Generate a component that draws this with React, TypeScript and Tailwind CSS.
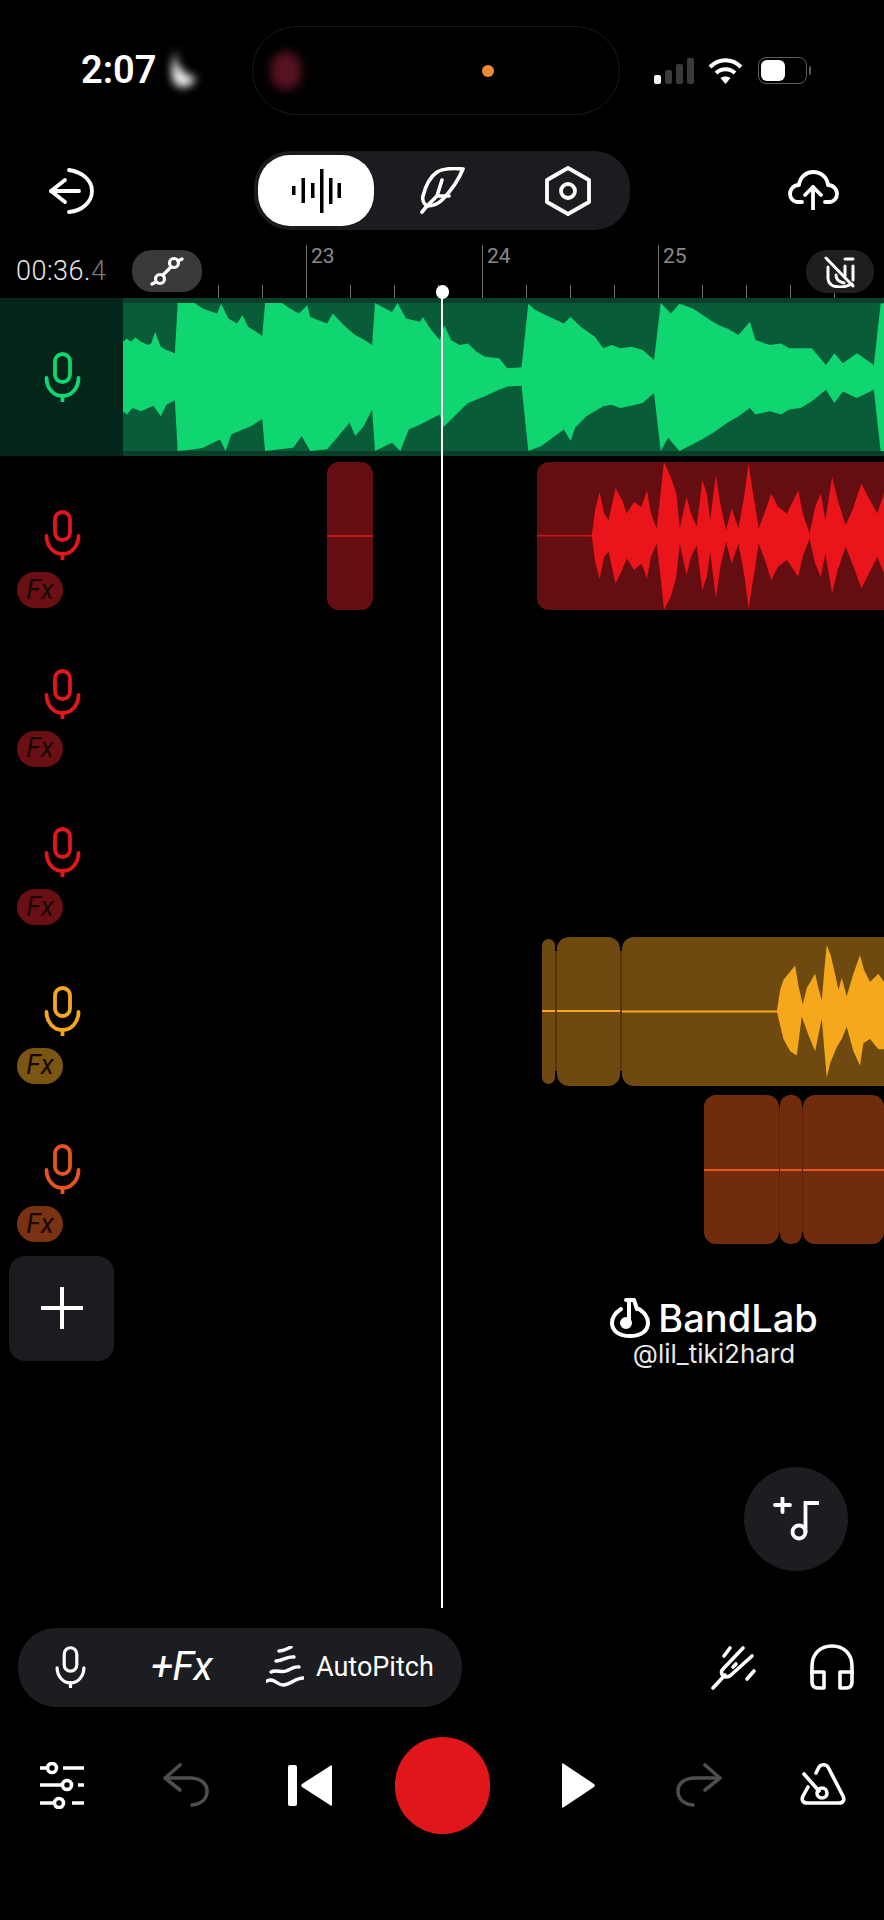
import React from "react";

const GREEN_TOP = "218,185 225,175 232,185 240,172 250,185 262,195 268,190 275,155 285,200 295,210 310,220 315,68 345,68 360,85 385,100 392,70 405,115 420,130 430,105 440,140 450,150 465,168 470,68 500,68 515,85 530,100 545,75 550,110 565,120 580,130 590,100 610,135 620,150 630,165 645,178 660,195 665,68 695,95 705,68 720,115 745,125 750,110 765,150 780,180 788,135 800,180 815,195 830,190 845,215 860,230 885,235 900,265 925,262 937,70 950,90 975,110 1000,130 1012,110 1030,140 1055,170 1070,205 1085,195 1100,205 1120,200 1140,210 1160,240 1172,68 1190,100 1205,70 1230,85 1260,120 1275,135 1290,145 1310,165 1330,125 1340,180 1365,195 1385,190 1400,205 1440,205 1465,255 1480,220 1495,250 1520,220 1550,255 1562,70 1568,68";
const GREEN_BOTTOM = "1568,515 1562,515 1550,330 1520,355 1495,335 1480,370 1465,330 1440,365 1420,385 1400,390 1385,405 1365,395 1340,405 1330,385 1310,410 1290,430 1265,460 1240,485 1205,515 1185,475 1172,515 1160,340 1140,370 1115,380 1100,385 1085,375 1070,380 1040,410 1020,445 1012,485 1000,450 960,500 937,515 925,318 900,320 885,330 860,350 830,370 815,395 800,420 785,445 780,405 745,435 725,450 710,515 695,490 665,515 660,390 645,440 630,470 620,430 595,480 580,510 550,515 535,470 520,505 470,515 465,418 445,440 430,450 410,465 400,515 390,480 360,505 345,510 315,515 310,362 295,375 285,410 272,378 250,395 235,385 225,405 218,395";
const RED_WAVE = "1050,767 1056,690 1064,635 1072,700 1080,720 1092,625 1104,660 1112,700 1125,665 1138,680 1148,630 1155,700 1165,745 1172,640 1178,545 1190,590 1200,640 1206,745 1218,650 1226,700 1236,740 1246,600 1254,640 1260,720 1270,585 1278,670 1288,750 1298,685 1310,745 1320,650 1328,550 1336,640 1346,745 1358,690 1368,640 1380,680 1396,700 1416,630 1424,700 1436,760 1446,680 1456,640 1464,720 1476,590 1486,660 1500,735 1512,690 1528,610 1540,650 1556,700 1568,640 1568,880 1556,830 1540,885 1528,925 1512,850 1500,800 1486,870 1476,940 1464,820 1456,890 1446,850 1436,775 1424,830 1416,890 1396,840 1380,860 1368,900 1358,845 1346,790 1336,900 1328,985 1320,880 1310,790 1298,850 1288,785 1278,860 1270,955 1260,815 1254,890 1246,930 1236,795 1226,830 1218,885 1206,790 1200,890 1190,950 1178,990 1172,890 1165,790 1155,830 1148,895 1138,850 1125,870 1112,835 1104,870 1092,910 1080,815 1072,830 1064,895 1056,845 1050,767";
const AMBER_WAVE = "830,222 840,170 850,145 870,125 885,110 895,160 908,205 920,165 945,130 955,165 965,195 975,100 980,60 992,85 1005,130 1015,170 1025,140 1040,185 1060,130 1080,85 1092,120 1110,150 1135,130 1152,150 1152,315 1135,315 1110,290 1090,300 1080,355 1060,320 1040,260 1025,290 1010,310 990,350 980,385 965,240 945,320 925,280 905,235 890,330 870,320 850,290 830,222";

function Mic({ color, className }: { color: string; className: string }) {
  return (
    <svg viewBox="0 0 37 50" className={className} fill="none" stroke={color} strokeWidth="3.8" strokeLinecap="round">
      <rect x="11" y="2" width="15" height="28" rx="7.5" />
      <path d="M2.500 26c0 10 7 18 16 18s16-8 16-18" />
      <path d="M18.500 44v5" />
    </svg>
  );
}

function Fx({ bg }: { bg: string }) {
  return (
    <div className={`flex h-[36px] w-[46px] items-center justify-center rounded-[18px] text-[27px] italic leading-none text-[#1a0806] [font-family:Roboto,sans-serif] ${bg}`}>
      Fx
    </div>
  );
}

function Sidebar({ color, fx }: { color: string; fx: string }) {
  return (
    <div className="flex w-[123px] shrink-0 flex-col pt-[54px]">
      <Mic color={color} className="ml-[44px] h-[50px] w-[37px]" />
      <div className="ml-[17px] mt-[12px]">
        <Fx bg={fx} />
      </div>
    </div>
  );
}

function CenterLine({ color }: { color: string }) {
  return <div className={`h-[2px] w-full ${color}`} />;
}

function Tick({ label }: { label?: string }) {
  if (label) {
    return (
      <div className="h-full w-[44px] shrink-0 border-l border-[#6f6f6f] pl-[4px] text-[21px] leading-[22px] text-[#8a8a8a]">
        {label}
      </div>
    );
  }
  return (
    <div className="flex h-full w-[44px] shrink-0 items-end">
      <div className="h-[13px] w-px bg-[#6f6f6f]" />
    </div>
  );
}

export default function App() {
  return (
    <div className="relative h-[1920px] w-[884px] overflow-hidden bg-black text-white [font-family:Roboto,sans-serif]">
      {/* status bar */}
      <div className="mt-[26px] flex h-[89px] items-center">
        <div className="ml-[81px] mt-[-1px] w-[78px] text-[38px] font-semibold leading-none">2:07</div>
        <svg viewBox="0 0 30 44" className="ml-[9px] h-[44px] w-[30px] blur-[4px]">
          <path d="M9 2c-3 12 3 22 19 27-6 14-26 12-24-6C4 12 6 6 9 2z" fill="#ededed" />
        </svg>
        <div className="relative ml-[54px] flex h-[89px] w-[368px] items-center rounded-[45px] border border-[#1a1a1a]">
          <div className="ml-[18px] h-[38px] w-[30px] rounded-full bg-[#571220] blur-[5px]" />
          <div className="ml-[181px] h-[12px] w-[12px] rounded-full bg-[#ee8a35]" />
        </div>
        <svg viewBox="0 0 40 26" className="ml-[34px] h-[26px] w-[40px]">
          <rect x="0" y="17" width="7" height="9" rx="2" fill="#f2f2f2" />
          <rect x="11" y="12" width="7" height="14" rx="2" fill="#3a3a3a" />
          <rect x="22" y="6" width="7" height="20" rx="2" fill="#3a3a3a" />
          <rect x="33" y="0" width="7" height="26" rx="2" fill="#3a3a3a" />
        </svg>
        <svg viewBox="0 0 35 26" className="ml-[14px] h-[26px] w-[35px]" fill="none" stroke="#fff" strokeWidth="4">
          <path d="M2 9c9-9 22-9 31 0" />
          <path d="M8 15c5.500-5 13.500-5 19 0" />
          <path d="M17.500 26l-5-6c3-2 7-2 10 0z" fill="#fff" stroke="none" />
        </svg>
        <div className="ml-[15px] flex items-center">
          <div className="flex h-[27px] w-[49px] items-center rounded-[8px] border border-[#5f5f5f] px-[2px]">
            <div className="h-[21px] w-[24px] rounded-[6px] bg-white" />
          </div>
          <div className="ml-[2px] h-[9px] w-[2px] rounded-r bg-[#5f5f5f]" />
        </div>
      </div>

      {/* top toolbar */}
      <div className="mt-[36px] flex h-[79px] items-center">
        <svg viewBox="0 0 46 46" className="ml-[48px] h-[46px] w-[46px]" fill="none" stroke="#fff" strokeWidth="3.800" strokeLinecap="round" strokeLinejoin="round">
          <path d="M21 2c13 2 23 10 23 21s-10 20-23 21" />
          <path d="M31 23H3" />
          <path d="M17 12L3 23l14 11" />
        </svg>
        <div className="ml-[160px] flex h-[79px] w-[376px] items-center rounded-[36px] bg-[#1b1c1f] pl-[4px]">
          <div className="flex h-[71px] w-[116px] items-center justify-center rounded-[32px] bg-white">
            <svg viewBox="0 0 50 44" className="h-[44px] w-[50px]" fill="#000">
              <rect x="1" y="17" width="3.500" height="9" />
              <rect x="10.500" y="9" width="3.500" height="25" />
              <rect x="20" y="14" width="3.500" height="15" />
              <rect x="29" y="0" width="3.500" height="44" />
              <rect x="38" y="9" width="3.500" height="26" />
              <rect x="46.500" y="14" width="3.500" height="15" />
            </svg>
          </div>
          <svg viewBox="0 0 46 47" className="ml-[46px] h-[47px] w-[46px]" fill="none" stroke="#fff" strokeWidth="3.600" strokeLinecap="round" strokeLinejoin="round">
            <path d="M43 2C33 1 24 1 17 5 10 10 6 17 3 29c-1 4 1 8 4 10 6 0 11-2 15-6 9-9 16-19 21-31z" />
            <path d="M2 45l5-6L17 29l5-16" />
            <path d="M17 29h12" />
          </svg>
          <svg viewBox="0 0 46 50" className="ml-[79px] h-[50px] w-[46px]" fill="none" stroke="#fff" strokeWidth="3.800" strokeLinejoin="round">
            <path d="M23 2l21 12v22L23 48 2 36V14z" />
            <circle cx="23" cy="25" r="7" />
          </svg>
        </div>
        <svg viewBox="0 0 51 40" className="ml-[158px] mt-[-2px] h-[40px] w-[51px]" fill="none" stroke="#fff" strokeWidth="3.800" strokeLinecap="round" strokeLinejoin="round">
          <path d="M14 32h-4c-5 0-8-4-8-8 0-5 4-9 9-9 1-8 7-13 14-13 8 0 14 5 15 13 5 0 9 4 9 9 0 4-3 8-8 8h-4" />
          <path d="M25 39V17" />
          <path d="M17 25l8-8 8 8" />
        </svg>
      </div>

      {/* ruler */}
      <div className="relative mt-[15px] flex h-[53px]">
        <div className="ml-[16px] mt-[15px] w-[116px] text-[27px] font-light leading-[22px] tracking-[0.5px] text-[#e8e8e8]">
          00:36.<span className="text-[#777]">4</span>
        </div>
        <div className="mt-[5px] flex h-[42px] w-[70px] items-center justify-center rounded-[20px] bg-[#3a3a3c]">
          <svg viewBox="0 0 34 32" className="h-[32px] w-[34px]" fill="none" stroke="#fff" strokeWidth="3.200" strokeLinecap="round">
            <circle cx="24" cy="8" r="4.500" />
            <circle cx="10" cy="24" r="4.500" />
            <path d="M21 12l-8 8M6 27l-4 2M28 6l4-2" />
          </svg>
        </div>
        <div className="ml-[16px] flex">
          {[undefined, undefined, "23", undefined, undefined, undefined, "24", undefined, undefined, undefined, "25", undefined, undefined, undefined, undefined].map((l, i) => (
            <Tick key={i} label={l} />
          ))}
        </div>
        <div className="absolute left-[806px] top-[5px] flex h-[43px] w-[68px] items-center justify-center rounded-[21px] bg-[#1f1f22]">
          <svg viewBox="0 0 32 32" className="h-[32px] w-[32px]" fill="none" stroke="#fff" strokeWidth="3" strokeLinecap="round">
            <path d="M2 2l27 28" />
            <path d="M4 11v11c0 6 5 9 12 9 4 0 8-1 12-3" />
            <path d="M12 19c0 4 3 7 8 8" />
            <path d="M21 10v10" />
            <path d="M29 10v14" />
            <path d="M21 3h8" />
          </svg>
        </div>
      </div>

      {/* green track */}
      <div className="flex h-[158px] bg-[#0a3f2a]">
        <div className="flex w-[123px] shrink-0 items-center bg-[#04261a] pl-[44px]">
          <Mic color="#0fd671" className="h-[50px] w-[37px]" />
        </div>
        <div className="my-[5px] flex-1 overflow-hidden bg-[#085c37]">
          <svg viewBox="218 68 1350 447" preserveAspectRatio="none" className="block h-full w-full">
            <polygon points={`${GREEN_TOP} ${GREEN_BOTTOM}`} fill="#0fd671" />
          </svg>
        </div>
      </div>

      {/* red track 1 */}
      <div className="flex h-[158.500px]">
        <Sidebar color="#e2161c" fx="bg-[#6a1015]" />
        <div className="flex flex-1 pt-[6px]">
          <div className="ml-[204px] flex h-[148px] w-[46px] items-center rounded-[12px] bg-[#640e11]">
            <CenterLine color="bg-[#c8141a]" />
          </div>
          <div className="ml-[164px] h-[148px] flex-1 overflow-hidden rounded-l-[12px] bg-[#640e11]">
            <svg viewBox="953 545 615 445" preserveAspectRatio="none" className="block h-full w-full">
              <rect x="953" y="764" width="100" height="5" fill="#c8141a" />
              <polygon points={RED_WAVE} fill="#ea151b" />
            </svg>
          </div>
        </div>
      </div>
      <div className="flex h-[158.500px]">
        <Sidebar color="#e2161c" fx="bg-[#6a1015]" />
      </div>
      <div className="flex h-[158.500px]">
        <Sidebar color="#e2161c" fx="bg-[#6a1015]" />
      </div>

      {/* amber */}
      <div className="flex h-[158.500px]">
        <Sidebar color="#f5a81c" fx="bg-[#7a5514]" />
        <div className="flex h-[159px] flex-1 items-center">
          <div className="ml-[419px] flex h-[145px] w-[13px] items-center rounded-[7px] bg-[#6f4a10]">
            <CenterLine color="bg-[#f5a81c]" />
          </div>
          <div className="h-[120px] w-[2px] bg-[#543809]" />
          <div className="flex h-[149px] w-[63px] items-center rounded-[12px] bg-[#6f4a10]">
            <CenterLine color="bg-[#f5a81c]" />
          </div>
          <div className="h-[120px] w-[2px] bg-[#543809]" />
          <div className="h-[149px] flex-1 overflow-hidden rounded-l-[12px] bg-[#6f4a10]">
            <svg viewBox="365 40 787 365" preserveAspectRatio="none" className="block h-full w-full">
              <rect x="365" y="220" width="470" height="5" fill="#f5a81c" />
              <polygon points={AMBER_WAVE} fill="#f5a81c" />
            </svg>
          </div>
        </div>
      </div>

      {/* orange */}
      <div className="flex h-[158.500px]">
        <Sidebar color="#e8531e" fx="bg-[#7a3312]" />
        <div className="flex h-[159px] flex-1 items-center">
          <div className="ml-[581px] flex h-[149px] w-[75px] items-center rounded-[12px] bg-[#712c0e]">
            <CenterLine color="bg-[#e8531e]" />
          </div>
          <div className="h-[125px] w-px bg-[#5c240b]" />
          <div className="flex h-[149px] w-[22px] items-center rounded-[10px] bg-[#712c0e]">
            <CenterLine color="bg-[#e8531e]" />
          </div>
          <div className="h-[125px] w-px bg-[#5c240b]" />
          <div className="flex h-[149px] flex-1 items-center rounded-[12px] bg-[#712c0e]">
            <CenterLine color="bg-[#e8531e]" />
          </div>
        </div>
      </div>

      {/* lower canvas */}
      <div className="flex h-[376px] items-start">
        <div className="ml-[9px] mt-[7px] flex h-[105px] w-[105px] items-center justify-center rounded-[16px] bg-[#1b1c1f]">
          <svg viewBox="0 0 42 42" className="h-[42px] w-[42px]" stroke="#fff" strokeWidth="4">
            <path d="M0 21h42M21 0v42" />
          </svg>
        </div>
        <div className="ml-[497px] flex w-[273px] flex-col pt-[49px]">
          <div className="flex w-[206px] flex-col items-center">
            <div className="flex items-center">
              <svg viewBox="0 0 40 40" className="h-[40px] w-[40px]" fill="none" stroke="#fff" strokeWidth="4" strokeLinecap="round" strokeLinejoin="round">
                <path d="M11 11C5 15 2 20 2 25c0 8 7 13 18 13s18-5 18-13c0-5-3-10-9-14" />
                <path d="M16 2h8l3 9" />
                <path d="M19 2v22" />
                <circle cx="16" cy="25" r="4" fill="#fff" />
              </svg>
              <div className="ml-[8px] text-[38px] font-medium leading-[38px] [font-family:Inter,sans-serif]">BandLab</div>
            </div>
            <div className="mt-px text-[26px] leading-[30px] text-[#e8e8e8] [font-family:Inter,sans-serif]">@lil_tiki2hard</div>
          </div>
          <div className="ml-[133px] mt-[98px] flex h-[104px] w-[104px] items-center justify-center rounded-full bg-[#1b1d20]">
            <svg viewBox="0 0 46 44" className="h-[44px] w-[46px]" fill="none" stroke="#fff" strokeWidth="3.800" strokeLinecap="round">
              <path d="M2 8h15M9.500 1v14" />
              <circle cx="26" cy="35" r="6.500" />
              <path d="M32.500 35V6H45" />
            </svg>
          </div>
        </div>
      </div>

      {/* tool row */}
      <div className="mt-[3px] flex h-[79px] items-center">
        <div className="ml-[18px] flex h-[79px] w-[444px] items-center rounded-[38px] bg-[#1c1d20]">
          <Mic color="#fff" className="ml-[37px] h-[42px] w-[31px]" />
          <div className="ml-[65px] w-[65px] text-[40px] italic leading-none tracking-[-0.5px]">+Fx</div>
          <svg viewBox="0 0 38 42" className="ml-[50px] h-[42px] w-[38px]" fill="none" stroke="#fff" strokeWidth="3.400" strokeLinecap="round">
            <path d="M13 5c4 0 8-2 12-4" />
            <path d="M10 15c6 0 12-5 18-4" />
            <path d="M5 26c5-3 10 1 15-1 5-2 8-5 13-4" />
            <path d="M1 35c7-4 11 5 17 4 7-1 12-7 19-7" />
          </svg>
          <div className="ml-[12px] text-[27px] leading-none">AutoPitch</div>
        </div>
        <svg viewBox="0 0 46 46" className="ml-[249px] h-[46px] w-[46px]" fill="none" stroke="#fff" strokeWidth="3.600" strokeLinecap="round" strokeLinejoin="round">
          <path d="M2 44l12-13" />
          <path d="M32 4L12 25c-3 3-1 8 3 8 2 0 4-1 5-2l21-19" />
          <path d="M13 12l6-8" />
          <path d="M36 35l7-8" />
          <path d="M25 20l-3 3" />
        </svg>
        <svg viewBox="0 0 44 46" className="ml-[53px] h-[46px] w-[44px]" fill="none" stroke="#fff" strokeWidth="3.600" strokeLinejoin="round">
          <path d="M2 30V22C2 10 10 2 22 2s20 8 20 20v8" />
          <path d="M2 28h12v16H8c-4 0-6-2-6-6z" />
          <path d="M42 28H30v16h6c4 0 6-2 6-6z" />
        </svg>
      </div>

      {/* transport */}
      <div className="mt-[30px] flex h-[97px] items-center">
        <svg viewBox="0 0 44 47" className="ml-[40px] h-[47px] w-[44px]" fill="none" stroke="#fff" strokeWidth="3.600">
          <path d="M0 6h6M23 6h21" />
          <circle cx="12" cy="6" r="4.500" />
          <path d="M0 23h22M38 23h6" />
          <circle cx="27" cy="23" r="4.500" />
          <path d="M0 41h13M32 41h12" />
          <circle cx="19" cy="41" r="4.500" />
        </svg>
        <svg viewBox="0 0 46 44" className="ml-[79px] h-[44px] w-[46px]" fill="none" stroke="#4d4d4d" strokeWidth="3.600" strokeLinecap="round" strokeLinejoin="round">
          <path d="M17 2L2 15l15 12" />
          <path d="M3 15h24c10 0 17 5 17 13 0 8-6 13-15 14" />
        </svg>
        <svg viewBox="0 0 46 41" className="ml-[79px] h-[41px] w-[46px]" fill="#fff">
          <rect x="0" y="0" width="9" height="41" rx="2" />
          <path d="M44 1v39c0 1-1 1-2 0L14 22c-1-1-1-2 0-3L42 1c1-1 2-1 2 0z" />
        </svg>
        <div className="ml-[61px] h-[97px] w-[95px] rounded-full bg-[#e0161b]" />
        <svg viewBox="0 0 33 45" className="ml-[72px] h-[45px] w-[33px]" fill="#fff">
          <path d="M0 2c0-2 1-2 2-1l30 20c1 1 1 2 0 3L2 44c-1 1-2 1-2-1z" />
        </svg>
        <svg viewBox="0 0 46 44" className="ml-[81px] h-[44px] w-[46px]" fill="none" stroke="#4d4d4d" strokeWidth="3.600" strokeLinecap="round" strokeLinejoin="round">
          <path d="M29 2l15 13-15 12" />
          <path d="M43 15H19C9 15 2 20 2 28c0 8 6 13 15 14" />
        </svg>
        <svg viewBox="0 0 46 44" className="ml-[78px] h-[44px] w-[46px]" fill="none" stroke="#fff" strokeWidth="3.600" strokeLinecap="round" strokeLinejoin="round">
          <path d="M16 10l3-6c2-3 7-3 9 0l15 29c2 4 0 7-4 7H7c-4 0-6-3-4-7l5-9" />
          <path d="M4 11l15 17" />
          <circle cx="22" cy="30" r="5" />
        </svg>
      </div>

      {/* playhead */}
      <div className="absolute left-[441px] top-[290px] h-[1318px] w-[2px] bg-white" />
      <div className="absolute left-[435.500px] top-[285px] h-[14px] w-[13px] rounded-full bg-white" />
    </div>
  );
}
